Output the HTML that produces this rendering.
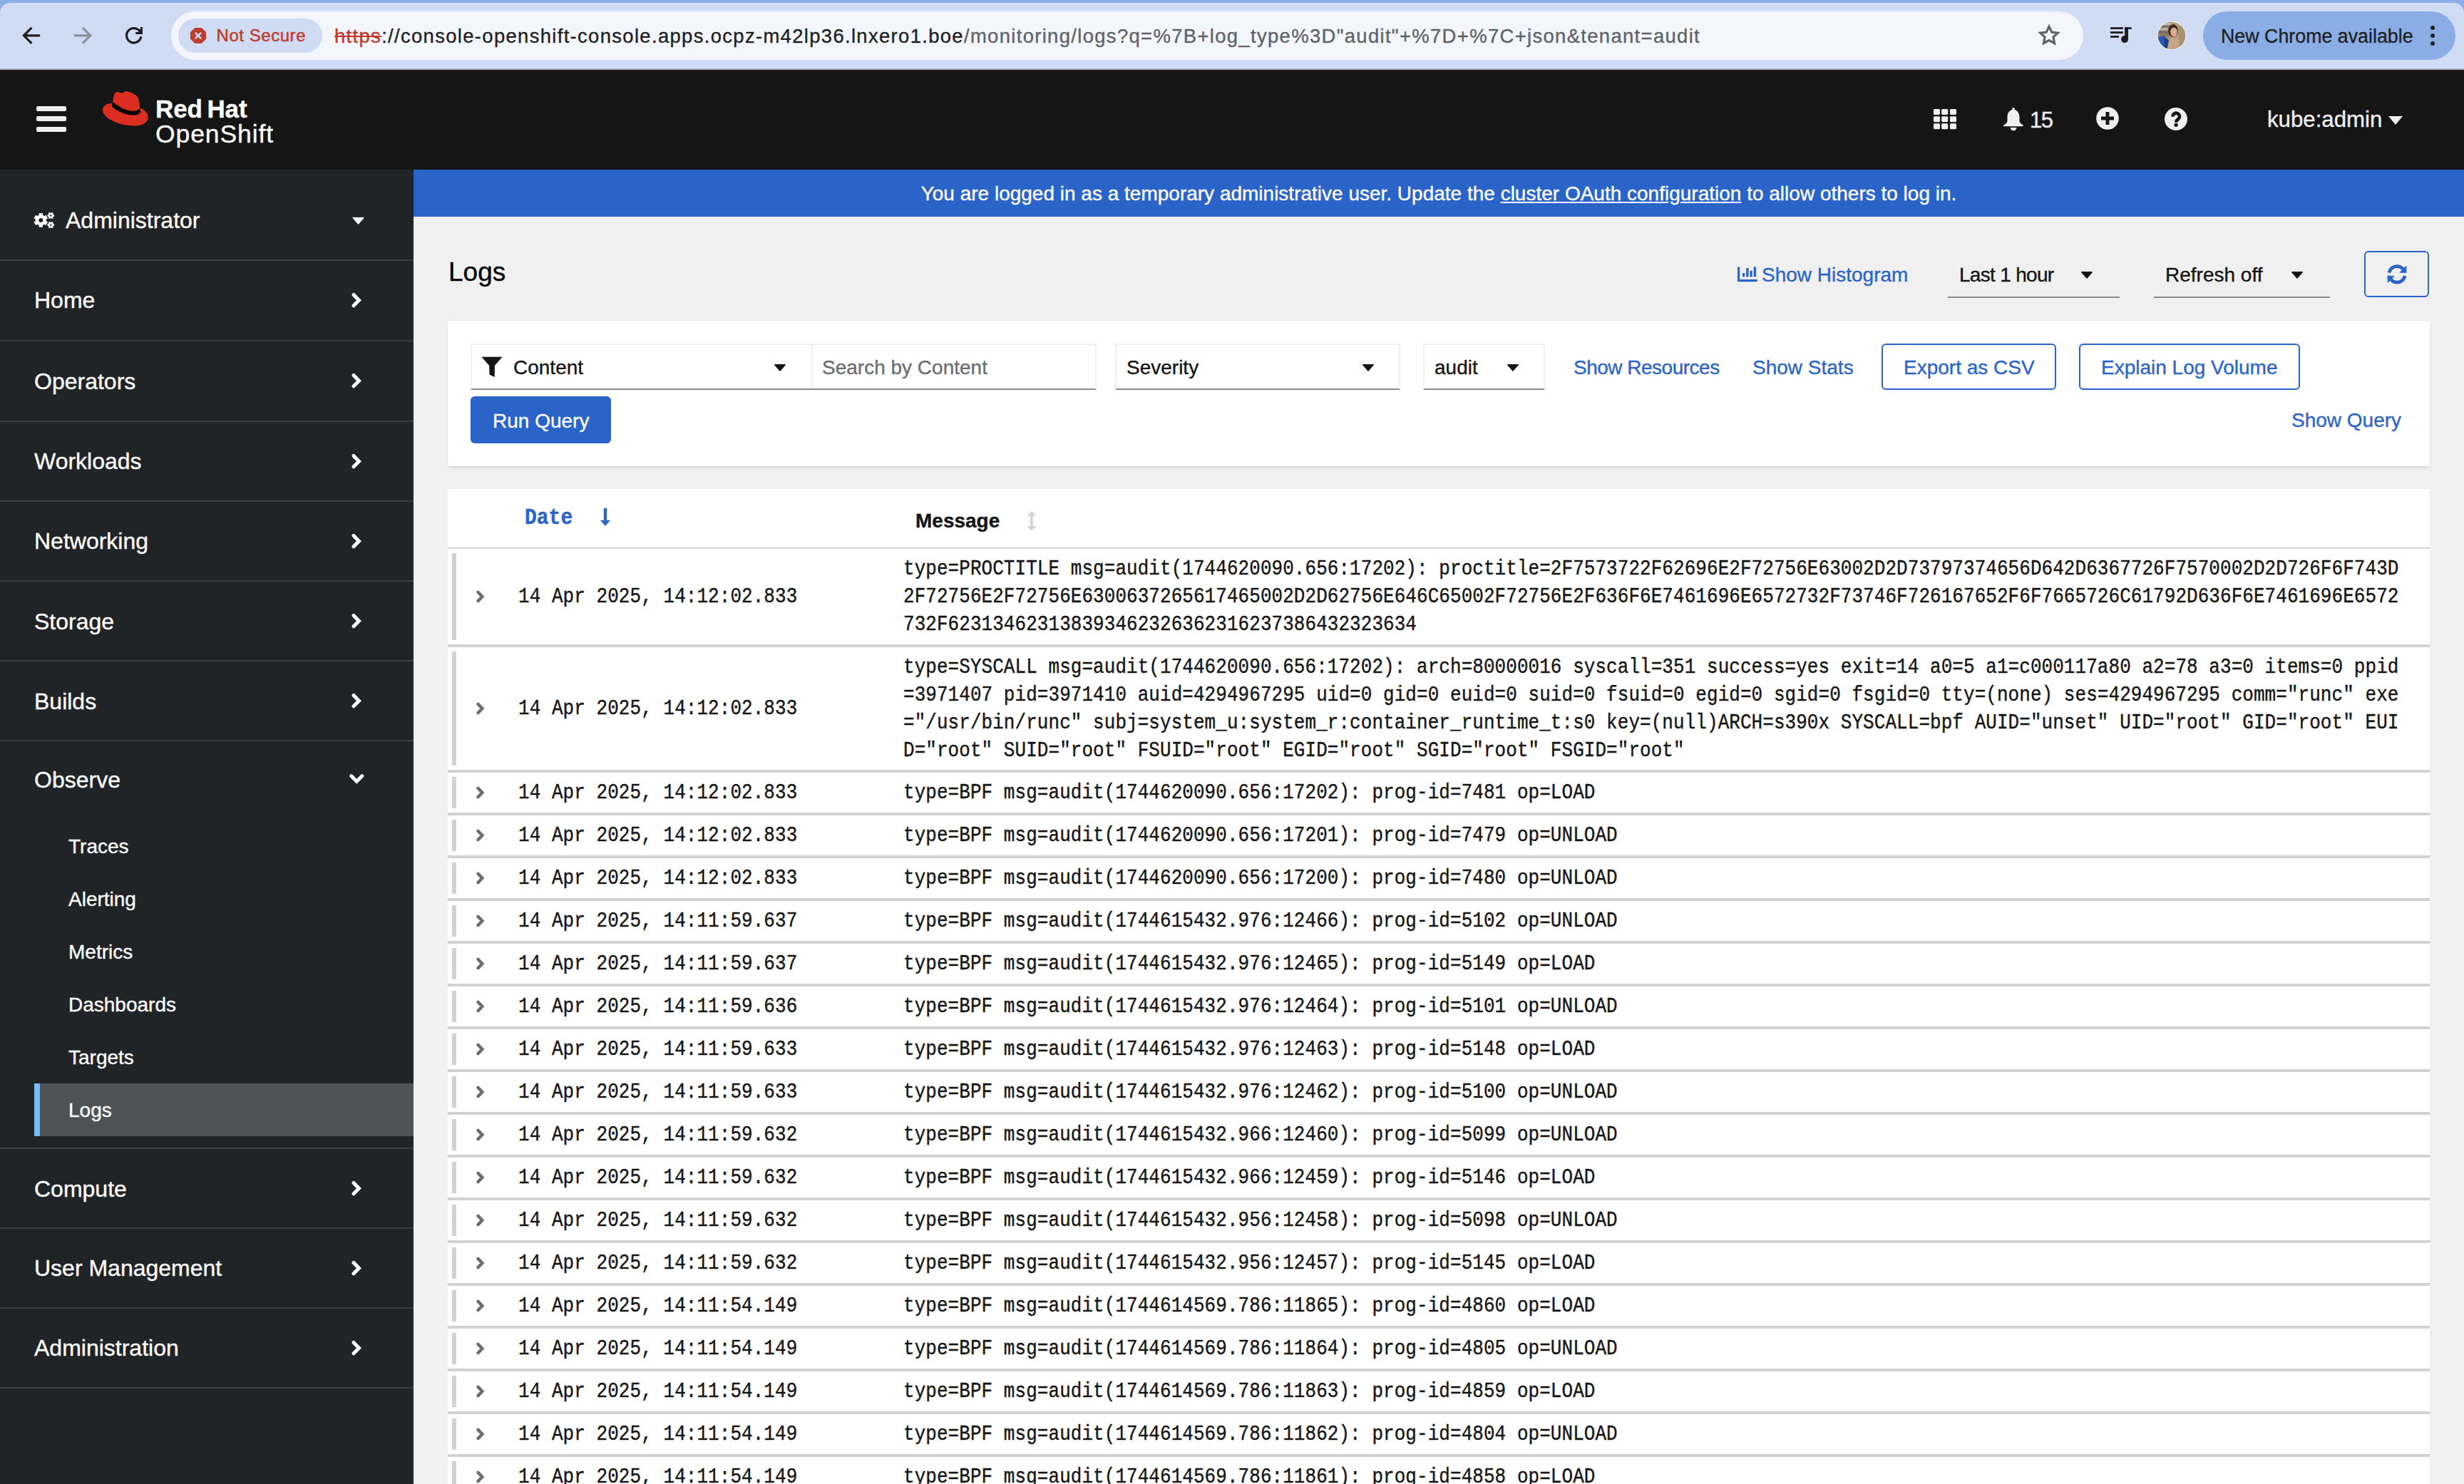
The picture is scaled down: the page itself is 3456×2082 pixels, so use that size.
<!DOCTYPE html>
<html><head><meta charset="utf-8"><title>Logs · Red Hat OpenShift</title>
<style>
html,body{margin:0;padding:0;}
body{width:3456px;height:2082px;overflow:hidden;position:relative;background:#f0f0f0;font-family:"Liberation Sans",sans-serif;}
.t{position:absolute;white-space:pre;line-height:1;-webkit-text-stroke-width:0.35px;}
svg{overflow:visible}
</style></head><body>
<div style="position:absolute;left:0px;top:0px;width:3456px;height:98px;background:#8aade5"></div>
<div style="position:absolute;left:0px;top:4px;width:3456px;height:94px;background:#cfdcf3;border-radius:14px 14px 0 0"></div>
<div style="position:absolute;left:0px;top:96px;width:3456px;height:2px;background:#aab5c8"></div>
<svg style="position:absolute;left:20px;top:25px" width="200" height="50" viewBox="0 0 200 50"><path d="M36.1,24.8 H13.5 M24.4,13.8 L13.4,24.8 L24.4,35.8" fill="none" stroke="#1f1f1f" stroke-width="3.2"/><path d="M84,24.8 H106.5 M95.8,13.8 L106.8,24.8 L95.8,35.8" fill="none" stroke="#8a929e" stroke-width="3.2"/><path d="M177.8,26.23 A10.2,10.2 0 1 1 175.72,18.46" fill="none" stroke="#1f1f1f" stroke-width="3.2"/><path d="M170.2,21.5 H178.5 V13" fill="none" stroke="#1f1f1f" stroke-width="3.0" stroke-linejoin="miter"/><path d="M175,17.5 L178.5,13.5 L178.5,21.5 L174,21.5 Z" fill="#1f1f1f"/></svg>
<div style="position:absolute;left:240px;top:16px;width:2682px;height:68px;background:#f3f6fc;border-radius:34px"></div>
<div style="position:absolute;left:250px;top:26px;width:202px;height:48px;background:#cfdcf3;border-radius:24px"></div>
<svg style="position:absolute;left:260px;top:30px" width="40" height="40" viewBox="0 0 40 40"><path d="M13.3,8.9 L22.7,8.9 L29.1,15.3 L29.1,24.7 L22.7,31 L13.3,31 L6.9,24.6 L6.9,15.3 Z" fill="#bf3d2e"/><path d="M13.9,15.9 L22.1,24.1 M22.1,15.9 L13.9,24.1" stroke="#d3e3fa" stroke-width="2.4"/></svg>
<div class="t" style="left:303.5px;top:37.50px;font-size:24px;color:#bf3d2e;font-weight:normal;font-family:'Liberation Sans', sans-serif;letter-spacing:0.55px;-webkit-text-stroke:0.5px #bf3d2e">Not Secure</div>
<div class="t" style="left:469px;top:36.92px;font-size:27.5px;color:#1f1f1f;font-weight:normal;font-family:'Liberation Sans', sans-serif;letter-spacing:1.3px"><span style="color:#c5372c;text-decoration:line-through">https</span>://console-openshift-console.apps.ocpz-m42lp36.lnxero1.boe<span style="color:#5f6368">/monitoring/logs?q=%7B+log_type%3D"audit"+%7D+%7C+json&amp;tenant=audit</span></div>
<svg style="position:absolute;left:2850px;top:25px" width="50" height="50" viewBox="0 0 50 50"><path d="M24.00,12.30 L27.70,20.10 L36.27,21.21 L29.99,27.15 L31.58,35.64 L24.00,31.50 L16.42,35.64 L18.01,27.15 L11.73,21.21 L20.30,20.10 Z" fill="none" stroke="#5f6368" stroke-width="3.2" stroke-linejoin="miter"/></svg>
<svg style="position:absolute;left:2950px;top:30px" width="50" height="40" viewBox="0 0 50 40"><rect x="10" y="8.2" width="17.9" height="2.8" fill="#1f1f1f"/><rect x="10" y="14.2" width="17.9" height="2.8" fill="#1f1f1f"/><rect x="10" y="20.1" width="11.9" height="2.8" fill="#1f1f1f"/><rect x="30.1" y="8.2" width="4.9" height="17" fill="#1f1f1f"/><rect x="30.1" y="8.2" width="9.6" height="2.8" fill="#1f1f1f"/><circle cx="30.1" cy="25.1" r="5" fill="#1f1f1f"/></svg>
<svg style="position:absolute;left:3026px;top:30px" width="40" height="40" viewBox="0 0 40 40"><defs><clipPath id="av"><circle cx="20" cy="20" r="19.2"/></clipPath><linearGradient id="st" x1="0" y1="0" x2="0" y2="1"><stop offset="0" stop-color="#8c7a68"/><stop offset="0.15" stop-color="#d8cfc4"/><stop offset="0.3" stop-color="#6e5e50"/><stop offset="0.45" stop-color="#cfc2b2"/><stop offset="0.6" stop-color="#7a6856"/><stop offset="1" stop-color="#a89078"/></linearGradient></defs><circle cx="20" cy="20" r="20" fill="#f8f8f8"/><g clip-path="url(#av)"><rect x="0" y="0" width="40" height="40" fill="#b89e80"/><rect x="0" y="0" width="18" height="24" fill="url(#st)"/><path d="M0,22 L10,20 L14,28 L12,40 L0,40 Z" fill="#2a5bb4"/><path d="M10,22 L16,26 L14,40 L9,40 Z" fill="#1b3f86"/><ellipse cx="22" cy="13" rx="7" ry="9" fill="#3d2c22"/><ellipse cx="23" cy="15" rx="4.8" ry="6.5" fill="#d8ad8e"/><path d="M14,40 C14,30 18,24 24,24 C32,24 38,30 40,40 Z" fill="#c4a684"/><path d="M28,8 L34,6 L40,14 L40,40 L32,40 Z" fill="#a8916f"/></g></svg>
<div style="position:absolute;left:3090px;top:16px;width:354px;height:68px;background:#8aade5;border-radius:34px"></div>
<div class="t" style="left:3115px;top:37.72px;font-size:26.8px;color:#1f1f1f;font-weight:normal;font-family:'Liberation Sans', sans-serif;">New Chrome available</div>
<svg style="position:absolute;left:3406px;top:34px" width="12" height="32" viewBox="0 0 12 32"><circle cx="6" cy="5" r="3" fill="#1f1f1f"/><circle cx="6" cy="16" r="3" fill="#1f1f1f"/><circle cx="6" cy="27" r="3" fill="#1f1f1f"/></svg>
<div style="position:absolute;left:0px;top:98px;width:3456px;height:140px;background:#151515"></div>
<div style="position:absolute;left:51px;top:148.5px;width:42px;height:7px;background:#f0f0f0;border-radius:2px"></div>
<div style="position:absolute;left:51px;top:163.3px;width:42px;height:7px;background:#f0f0f0;border-radius:2px"></div>
<div style="position:absolute;left:51px;top:178.3px;width:42px;height:7px;background:#f0f0f0;border-radius:2px"></div>
<svg style="position:absolute;left:138px;top:122px" width="76" height="60" viewBox="0 0 76 60"><path d="M19,23 C13,23 6,25.5 6,32.5 C6,42 26,54.5 50,54.5 C63,54.5 69.8,49 69.8,42.5 C69.8,37 65,32.5 60,30 C50,34 35,32 19,23 Z" fill="#db2e20"/><path d="M20.2,21 C21,14 22,8.5 25,7.3 C28.5,6 31,9.5 34,8.3 C36,7.5 37,6 39,6 C44,6.5 51,10 54,12.8 C57,16 57.8,24 58.5,31 C52,35 38,34 20.2,21 Z" fill="#db2e20"/><path d="M19,22.2 C28,28.5 38,33.5 50,33.8 C54,33.8 57,32 58.6,29.8 L59.4,35.2 C57.5,38 54,39.6 49,39.6 C38,39.4 27,34 19.4,28 C18.8,26 18.8,24 19,22.2 Z" fill="#000"/></svg>
<div class="t" style="left:218px;top:134.75px;font-size:35px;color:#fff;font-weight:bold;font-family:'Liberation Sans', sans-serif;letter-spacing:-0.1px;word-spacing:-3px">Red Hat</div>
<div class="t" style="left:218px;top:170.62px;font-size:35.5px;color:#fff;font-weight:normal;font-family:'Liberation Sans', sans-serif;letter-spacing:0.9px">OpenShift</div>
<svg style="position:absolute;left:2712px;top:152.8px" width="32" height="28.2" viewBox="0 0 32 28.2"><rect x="0" y="0" width="9" height="8" rx="1.4" fill="#f0f0f0"/><rect x="0" y="10.2" width="9" height="8" rx="1.4" fill="#f0f0f0"/><rect x="0" y="20.2" width="9" height="8" rx="1.4" fill="#f0f0f0"/><rect x="11.2" y="0" width="9" height="8" rx="1.4" fill="#f0f0f0"/><rect x="11.2" y="10.2" width="9" height="8" rx="1.4" fill="#f0f0f0"/><rect x="11.2" y="20.2" width="9" height="8" rx="1.4" fill="#f0f0f0"/><rect x="23" y="0" width="9" height="8" rx="1.4" fill="#f0f0f0"/><rect x="23" y="10.2" width="9" height="8" rx="1.4" fill="#f0f0f0"/><rect x="23" y="20.2" width="9" height="8" rx="1.4" fill="#f0f0f0"/></svg>
<svg style="position:absolute;left:2810px;top:150.8px" width="28" height="33" viewBox="0 0 28 33"><circle cx="14" cy="2" r="1.9" fill="#f0f0f0"/><path d="M14,2.5 C8.5,3 5.5,8 5.5,13 L5.5,19 C5.5,21 3,23 0.5,24.5 C0,25 0,26 0.8,26.3 L27.2,26.3 C28,26 28,25 27.5,24.5 C25,23 22.5,21 22.5,19 L22.5,13 C22.5,8 19.5,3 14,2.5 Z" fill="#f0f0f0"/><path d="M9.7,28 L18.6,28 C18.2,30.5 16.5,32.4 14.1,32.4 C11.8,32.4 10,30.5 9.7,28 Z" fill="#f0f0f0"/></svg>
<div class="t" style="left:2847px;top:152.95px;font-size:31px;color:#f0f0f0;font-weight:normal;font-family:'Liberation Sans', sans-serif;letter-spacing:-1.5px">15</div>
<svg style="position:absolute;left:2940px;top:150px" width="32" height="32" viewBox="0 0 32 32"><circle cx="16" cy="16" r="15.8" fill="#f0f0f0"/><path d="M16 7v18M7 16h18" stroke="#151515" stroke-width="4.9"/></svg>
<svg style="position:absolute;left:3036px;top:151px" width="32" height="32" viewBox="0 0 32 32"><circle cx="16" cy="16" r="16" fill="#f0f0f0"/><path d="M11.6,12.6 A4.7,4.7 0 1 1 19.3,16 C17.6,17.3 16.2,18 16.2,20.8" fill="none" stroke="#151515" stroke-width="4.6"/><circle cx="16.1" cy="24.3" r="2.6" fill="#151515"/></svg>
<div class="t" style="left:3180px;top:152.48px;font-size:31.2px;color:#f0f0f0;font-weight:normal;font-family:'Liberation Sans', sans-serif;">kube:admin</div>
<svg style="position:absolute;left:3350px;top:163px" width="20" height="12" viewBox="0 0 20 12"><path d="M0 0h20L10 12z" fill="#f0f0f0"/></svg>
<div style="position:absolute;left:0px;top:238px;width:580px;height:1844px;background:#212427"></div>
<svg style="position:absolute;left:40px;top:290px" width="50" height="40" viewBox="0 0 50 40"><circle cx="17.3" cy="18.9" r="7.6" fill="#fff"/><rect x="14.65" y="9.099999999999998" width="5.3" height="9.8" fill="#fff" transform="rotate(0.0 17.3 18.9)"/><rect x="14.65" y="9.099999999999998" width="5.3" height="9.8" fill="#fff" transform="rotate(60.0 17.3 18.9)"/><rect x="14.65" y="9.099999999999998" width="5.3" height="9.8" fill="#fff" transform="rotate(120.0 17.3 18.9)"/><rect x="14.65" y="9.099999999999998" width="5.3" height="9.8" fill="#fff" transform="rotate(180.0 17.3 18.9)"/><rect x="14.65" y="9.099999999999998" width="5.3" height="9.8" fill="#fff" transform="rotate(240.0 17.3 18.9)"/><rect x="14.65" y="9.099999999999998" width="5.3" height="9.8" fill="#fff" transform="rotate(300.0 17.3 18.9)"/><circle cx="17.3" cy="18.9" r="3.0" fill="#212427"/><circle cx="31.3" cy="12.4" r="3.7" fill="#fff"/><rect x="30.150000000000002" y="7.6000000000000005" width="2.3" height="4.8" fill="#fff" transform="rotate(30.0 31.3 12.4)"/><rect x="30.150000000000002" y="7.6000000000000005" width="2.3" height="4.8" fill="#fff" transform="rotate(90.0 31.3 12.4)"/><rect x="30.150000000000002" y="7.6000000000000005" width="2.3" height="4.8" fill="#fff" transform="rotate(150.0 31.3 12.4)"/><rect x="30.150000000000002" y="7.6000000000000005" width="2.3" height="4.8" fill="#fff" transform="rotate(210.0 31.3 12.4)"/><rect x="30.150000000000002" y="7.6000000000000005" width="2.3" height="4.8" fill="#fff" transform="rotate(270.0 31.3 12.4)"/><rect x="30.150000000000002" y="7.6000000000000005" width="2.3" height="4.8" fill="#fff" transform="rotate(330.0 31.3 12.4)"/><circle cx="31.3" cy="12.4" r="1.2" fill="#212427"/><circle cx="31.3" cy="25.6" r="3.7" fill="#fff"/><rect x="30.150000000000002" y="20.8" width="2.3" height="4.8" fill="#fff" transform="rotate(30.0 31.3 25.6)"/><rect x="30.150000000000002" y="20.8" width="2.3" height="4.8" fill="#fff" transform="rotate(90.0 31.3 25.6)"/><rect x="30.150000000000002" y="20.8" width="2.3" height="4.8" fill="#fff" transform="rotate(150.0 31.3 25.6)"/><rect x="30.150000000000002" y="20.8" width="2.3" height="4.8" fill="#fff" transform="rotate(210.0 31.3 25.6)"/><rect x="30.150000000000002" y="20.8" width="2.3" height="4.8" fill="#fff" transform="rotate(270.0 31.3 25.6)"/><rect x="30.150000000000002" y="20.8" width="2.3" height="4.8" fill="#fff" transform="rotate(330.0 31.3 25.6)"/><circle cx="31.3" cy="25.6" r="1.2" fill="#212427"/></svg>
<div class="t" style="left:92px;top:292.80px;font-size:32px;color:#fff;font-weight:normal;font-family:'Liberation Sans', sans-serif;">Administrator</div>
<svg style="position:absolute;left:493.5px;top:305.4px" width="17" height="10" viewBox="0 0 17 10"><path d="M0.5 0.3h16L8.5 9.6z" fill="#fff" stroke="#fff" stroke-width="0.8" stroke-linejoin="round"/></svg>
<div style="position:absolute;left:0px;top:364px;width:580px;height:2px;background:#3c3f42"></div>
<div style="position:absolute;left:0px;top:477px;width:580px;height:2px;background:#3c3f42"></div>
<div style="position:absolute;left:0px;top:590px;width:580px;height:2px;background:#3c3f42"></div>
<div style="position:absolute;left:0px;top:702px;width:580px;height:2px;background:#3c3f42"></div>
<div style="position:absolute;left:0px;top:814px;width:580px;height:2px;background:#3c3f42"></div>
<div style="position:absolute;left:0px;top:926px;width:580px;height:2px;background:#3c3f42"></div>
<div style="position:absolute;left:0px;top:1038px;width:580px;height:2px;background:#3c3f42"></div>
<div style="position:absolute;left:0px;top:1610px;width:580px;height:2px;background:#3c3f42"></div>
<div style="position:absolute;left:0px;top:1722px;width:580px;height:2px;background:#3c3f42"></div>
<div style="position:absolute;left:0px;top:1834px;width:580px;height:2px;background:#3c3f42"></div>
<div style="position:absolute;left:0px;top:1946px;width:580px;height:2px;background:#3c3f42"></div>
<div class="t" style="left:48px;top:405.30px;font-size:32px;color:#fff;font-weight:normal;font-family:'Liberation Sans', sans-serif;">Home</div>
<svg style="position:absolute;left:490px;top:407.9px" width="20" height="26" viewBox="0 0 20 26"><path d="M6,5.5 L13.5,13.2 L6,20.8" fill="none" stroke="#fff" stroke-width="5" stroke-linecap="round"/></svg>
<div class="t" style="left:48px;top:518.60px;font-size:32px;color:#fff;font-weight:normal;font-family:'Liberation Sans', sans-serif;">Operators</div>
<svg style="position:absolute;left:490px;top:521.1999999999999px" width="20" height="26" viewBox="0 0 20 26"><path d="M6,5.5 L13.5,13.2 L6,20.8" fill="none" stroke="#fff" stroke-width="5" stroke-linecap="round"/></svg>
<div class="t" style="left:48px;top:631.20px;font-size:32px;color:#fff;font-weight:normal;font-family:'Liberation Sans', sans-serif;">Workloads</div>
<svg style="position:absolute;left:490px;top:633.8px" width="20" height="26" viewBox="0 0 20 26"><path d="M6,5.5 L13.5,13.2 L6,20.8" fill="none" stroke="#fff" stroke-width="5" stroke-linecap="round"/></svg>
<div class="t" style="left:48px;top:743.30px;font-size:32px;color:#fff;font-weight:normal;font-family:'Liberation Sans', sans-serif;">Networking</div>
<svg style="position:absolute;left:490px;top:745.9px" width="20" height="26" viewBox="0 0 20 26"><path d="M6,5.5 L13.5,13.2 L6,20.8" fill="none" stroke="#fff" stroke-width="5" stroke-linecap="round"/></svg>
<div class="t" style="left:48px;top:855.60px;font-size:32px;color:#fff;font-weight:normal;font-family:'Liberation Sans', sans-serif;">Storage</div>
<svg style="position:absolute;left:490px;top:858.1999999999999px" width="20" height="26" viewBox="0 0 20 26"><path d="M6,5.5 L13.5,13.2 L6,20.8" fill="none" stroke="#fff" stroke-width="5" stroke-linecap="round"/></svg>
<div class="t" style="left:48px;top:967.60px;font-size:32px;color:#fff;font-weight:normal;font-family:'Liberation Sans', sans-serif;">Builds</div>
<svg style="position:absolute;left:490px;top:970.1999999999999px" width="20" height="26" viewBox="0 0 20 26"><path d="M6,5.5 L13.5,13.2 L6,20.8" fill="none" stroke="#fff" stroke-width="5" stroke-linecap="round"/></svg>
<div class="t" style="left:48px;top:1651.60px;font-size:32px;color:#fff;font-weight:normal;font-family:'Liberation Sans', sans-serif;">Compute</div>
<svg style="position:absolute;left:490px;top:1654.2px" width="20" height="26" viewBox="0 0 20 26"><path d="M6,5.5 L13.5,13.2 L6,20.8" fill="none" stroke="#fff" stroke-width="5" stroke-linecap="round"/></svg>
<div class="t" style="left:48px;top:1763.20px;font-size:32px;color:#fff;font-weight:normal;font-family:'Liberation Sans', sans-serif;">User Management</div>
<svg style="position:absolute;left:490px;top:1765.8px" width="20" height="26" viewBox="0 0 20 26"><path d="M6,5.5 L13.5,13.2 L6,20.8" fill="none" stroke="#fff" stroke-width="5" stroke-linecap="round"/></svg>
<div class="t" style="left:48px;top:1875.20px;font-size:32px;color:#fff;font-weight:normal;font-family:'Liberation Sans', sans-serif;">Administration</div>
<svg style="position:absolute;left:490px;top:1877.8px" width="20" height="26" viewBox="0 0 20 26"><path d="M6,5.5 L13.5,13.2 L6,20.8" fill="none" stroke="#fff" stroke-width="5" stroke-linecap="round"/></svg>
<div class="t" style="left:48px;top:1078.30px;font-size:32px;color:#fff;font-weight:normal;font-family:'Liberation Sans', sans-serif;">Observe</div>
<svg style="position:absolute;left:485px;top:1080px" width="30" height="24" viewBox="0 0 30 24"><path d="M7.8,8.7 L15.3,16.2 L22.8,8.7" fill="none" stroke="#fff" stroke-width="5" stroke-linecap="round"/></svg>
<div style="position:absolute;left:48px;top:1520px;width:532px;height:74px;background:#4f5255"></div>
<div style="position:absolute;left:48px;top:1520px;width:8px;height:74px;background:#73bcf7"></div>
<div class="t" style="left:96px;top:1174.20px;font-size:28px;color:#fff;font-weight:normal;font-family:'Liberation Sans', sans-serif;">Traces</div>
<div class="t" style="left:96px;top:1247.90px;font-size:28px;color:#fff;font-weight:normal;font-family:'Liberation Sans', sans-serif;">Alerting</div>
<div class="t" style="left:96px;top:1321.70px;font-size:28px;color:#fff;font-weight:normal;font-family:'Liberation Sans', sans-serif;">Metrics</div>
<div class="t" style="left:96px;top:1395.70px;font-size:28px;color:#fff;font-weight:normal;font-family:'Liberation Sans', sans-serif;">Dashboards</div>
<div class="t" style="left:96px;top:1469.50px;font-size:28px;color:#fff;font-weight:normal;font-family:'Liberation Sans', sans-serif;">Targets</div>
<div class="t" style="left:96px;top:1544.20px;font-size:28px;color:#fff;font-weight:normal;font-family:'Liberation Sans', sans-serif;">Logs</div>
<div style="position:absolute;left:580px;top:238px;width:2876px;height:66px;background:#2b64c8"></div>
<div class="t" style="left:580px;width:2876px;text-align:center;top:257.90px;font-size:28px;color:#fff">You are logged in as a temporary administrative user. Update the <span style="text-decoration:underline">cluster OAuth configuration</span> to allow others to log in.</div>
<div style="position:absolute;left:580px;top:304px;width:2876px;height:1778px;background:#f0f0f0"></div>
<div class="t" style="left:629px;top:363.35px;font-size:37px;color:#000;font-weight:normal;font-family:'Liberation Sans', sans-serif;">Logs</div>
<svg style="position:absolute;left:2430px;top:365px" width="40" height="40" viewBox="0 0 40 40"><path d="M7,9.4 h3.2 v17.6 h24.6 v3.2 H7 z" fill="#2b64c8"/><rect x="14" y="18" width="3.3" height="5.5" rx="0.8" fill="#2b64c8"/><rect x="19.2" y="11" width="3.4" height="12.5" rx="0.8" fill="#2b64c8"/><rect x="24.4" y="14.8" width="3.4" height="8.7" rx="0.8" fill="#2b64c8"/><rect x="29.7" y="9.2" width="3.4" height="14.3" rx="0.8" fill="#2b64c8"/></svg>
<div class="t" style="left:2471px;top:372.10px;font-size:28px;color:#2b64c8;font-weight:normal;font-family:'Liberation Sans', sans-serif;">Show Histogram</div>
<div class="t" style="left:2748px;top:372.10px;font-size:28px;color:#151515;font-weight:normal;font-family:'Liberation Sans', sans-serif;letter-spacing:-0.7px">Last 1 hour</div>
<svg style="position:absolute;left:2919px;top:381.4px" width="16" height="10" viewBox="0 0 16 10"><path d="M0.8,0.8 H15.2 L8,9.0 Z" fill="#151515" stroke="#151515" stroke-width="1.5" stroke-linejoin="round"/></svg>
<div style="position:absolute;left:2732px;top:416px;width:241px;height:2px;background:#8a8d90"></div>
<div class="t" style="left:3037px;top:372.10px;font-size:28px;color:#151515;font-weight:normal;font-family:'Liberation Sans', sans-serif;">Refresh off</div>
<svg style="position:absolute;left:3214px;top:381.4px" width="16" height="10" viewBox="0 0 16 10"><path d="M0.8,0.8 H15.2 L8,9.0 Z" fill="#151515" stroke="#151515" stroke-width="1.5" stroke-linejoin="round"/></svg>
<div style="position:absolute;left:3021px;top:416px;width:247px;height:2px;background:#8a8d90"></div>
<div style="position:absolute;left:3316px;top:352px;width:91px;height:65px;box-sizing:border-box;border:2px solid #2b64c8;border-radius:6px"></div>
<svg style="position:absolute;left:3340px;top:360px" width="50" height="50" viewBox="0 0 50 50"><path d="M11,22.66 A11.2,11.2 0 0 1 30.58,17.6" fill="none" stroke="#2b64c8" stroke-width="4.7"/><path d="M34.8,13.2 L35.1,22.6 L25.9,22.2 Z" fill="#2b64c8" stroke="#2b64c8" stroke-width="0.8" stroke-linejoin="round"/><g transform="rotate(180 22 24.8)"><path d="M11,22.66 A11.2,11.2 0 0 1 30.58,17.6" fill="none" stroke="#2b64c8" stroke-width="4.7"/><path d="M34.8,13.2 L35.1,22.6 L25.9,22.2 Z" fill="#2b64c8" stroke="#2b64c8" stroke-width="0.8" stroke-linejoin="round"/></g></svg>
<div style="position:absolute;left:628px;top:450px;width:2780px;height:204px;background:#fff;box-shadow:0 4px 6px -3px rgba(3,3,3,0.16), 0 0 3px rgba(3,3,3,0.04)"></div>
<div style="position:absolute;left:660px;top:482px;width:878px;height:65px;box-sizing:border-box;border:2px solid #f0f0f0;border-bottom:2px solid #8a8d90"></div>
<div style="position:absolute;left:1138px;top:482px;width:2px;height:63px;background:#f0f0f0"></div>
<svg style="position:absolute;left:675px;top:500px" width="30" height="30" viewBox="0 0 30 30"><path d="M1.1,1.1 L28.9,1.1 L18.5,12.9 L18.3,28.4 L11.9,25.4 L11.6,12.9 Z" fill="#151515" stroke="#151515" stroke-width="0.8" stroke-linejoin="round"/></svg>
<div class="t" style="left:720px;top:502.20px;font-size:28px;color:#151515;font-weight:normal;font-family:'Liberation Sans', sans-serif;">Content</div>
<svg style="position:absolute;left:1086px;top:511.2px" width="16" height="10" viewBox="0 0 16 10"><path d="M0.8,0.8 H15.2 L8,9.0 Z" fill="#151515" stroke="#151515" stroke-width="1.5" stroke-linejoin="round"/></svg>
<div class="t" style="left:1153px;top:502.20px;font-size:28px;color:#6a6e73;font-weight:normal;font-family:'Liberation Sans', sans-serif;">Search by Content</div>
<div style="position:absolute;left:1564px;top:482px;width:400px;height:65px;box-sizing:border-box;border:2px solid #f0f0f0;border-bottom:2px solid #8a8d90"></div>
<div class="t" style="left:1580px;top:502.20px;font-size:28px;color:#151515;font-weight:normal;font-family:'Liberation Sans', sans-serif;">Severity</div>
<svg style="position:absolute;left:1911px;top:511.2px" width="16" height="10" viewBox="0 0 16 10"><path d="M0.8,0.8 H15.2 L8,9.0 Z" fill="#151515" stroke="#151515" stroke-width="1.5" stroke-linejoin="round"/></svg>
<div style="position:absolute;left:1996px;top:482px;width:171px;height:65px;box-sizing:border-box;border:2px solid #f0f0f0;border-bottom:2px solid #8a8d90"></div>
<div class="t" style="left:2012px;top:502.20px;font-size:28px;color:#151515;font-weight:normal;font-family:'Liberation Sans', sans-serif;">audit</div>
<svg style="position:absolute;left:2114px;top:511.2px" width="16" height="10" viewBox="0 0 16 10"><path d="M0.8,0.8 H15.2 L8,9.0 Z" fill="#151515" stroke="#151515" stroke-width="1.5" stroke-linejoin="round"/></svg>
<div class="t" style="left:2207px;top:501.90px;font-size:28px;color:#2b64c8;font-weight:normal;font-family:'Liberation Sans', sans-serif;letter-spacing:-0.5px">Show Resources</div>
<div class="t" style="left:2458px;top:501.90px;font-size:28px;color:#2b64c8;font-weight:normal;font-family:'Liberation Sans', sans-serif;">Show Stats</div>
<div style="position:absolute;left:2639px;top:482px;width:245px;height:65px;box-sizing:border-box;border:2px solid #2b64c8;border-radius:6px"></div>
<div class="t" style="left:2670px;top:501.90px;font-size:28px;color:#2b64c8;font-weight:normal;font-family:'Liberation Sans', sans-serif;">Export as CSV</div>
<div style="position:absolute;left:2916px;top:482px;width:310px;height:65px;box-sizing:border-box;border:2px solid #2b64c8;border-radius:6px"></div>
<div class="t" style="left:2947px;top:501.90px;font-size:28px;color:#2b64c8;font-weight:normal;font-family:'Liberation Sans', sans-serif;">Explain Log Volume</div>
<div style="position:absolute;left:660px;top:556px;width:197px;height:66px;background:#2b64c8;border-radius:6px"></div>
<div class="t" style="left:691px;top:576.50px;font-size:28px;color:#fff;font-weight:normal;font-family:'Liberation Sans', sans-serif;">Run Query</div>
<div class="t" style="left:3214px;top:575.70px;font-size:28px;color:#2b64c8;font-weight:normal;font-family:'Liberation Sans', sans-serif;">Show Query</div>
<div style="position:absolute;left:628px;top:686px;width:2780px;height:1396px;background:#fff"></div>
<div class="t" style="left:736px;top:713.72px;font-size:28px;color:#2b64c8;font-weight:bold;font-family:'Liberation Mono', monospace;transform:scaleY(1.1);transform-origin:0 21.28px;">Date</div>
<svg style="position:absolute;left:842px;top:713px" width="14" height="26" viewBox="0 0 14 26"><path d="M7 0v22" stroke="#2b64c8" stroke-width="4.4"/><path d="M0 17l7 8 7-8z" fill="#2b64c8"/></svg>
<div class="t" style="left:1284px;top:717.00px;font-size:28px;color:#151515;font-weight:bold;font-family:'Liberation Sans', sans-serif;">Message</div>
<svg style="position:absolute;left:1441px;top:717px" width="12" height="28" viewBox="0 0 12 28"><path d="M6 3v22" stroke="#d2d2d2" stroke-width="3.4"/><path d="M0 7l6-7 6 7zM0 21l6 7 6-7z" fill="#d2d2d2"/></svg>
<div style="position:absolute;left:628px;top:768px;width:2780px;height:2px;background:#d2d2d2"></div>
<div style="position:absolute;left:634px;top:776px;width:6px;height:122px;background:#d2d2d2"></div>
<svg style="position:absolute;left:667px;top:827.0px" width="14" height="20" viewBox="0 0 14 20"><path d="M3.5,3.9 L9.4,10 L3.5,16.1" fill="none" stroke="#6a6e73" stroke-width="4.4" stroke-linecap="round"/></svg>
<div class="t" style="left:727px;top:825.44px;font-size:26px;color:#151515;font-weight:normal;font-family:'Liberation Mono', monospace;transform:scaleY(1.1);transform-origin:0 19.76px;letter-spacing:0.05px">14 Apr 2025, 14:12:02.833</div>
<div class="t" style="left:1267px;top:786.44px;font-size:26px;color:#151515;font-weight:normal;font-family:'Liberation Mono', monospace;transform:scaleY(1.1);transform-origin:0 19.76px;letter-spacing:0.05px">type=PROCTITLE msg=audit(1744620090.656:17202): proctitle=2F7573722F62696E2F72756E63002D2D73797374656D642D6367726F7570002D2D726F6F743D</div>
<div class="t" style="left:1267px;top:825.44px;font-size:26px;color:#151515;font-weight:normal;font-family:'Liberation Mono', monospace;transform:scaleY(1.1);transform-origin:0 19.76px;letter-spacing:0.05px">2F72756E2F72756E6300637265617465002D2D62756E646C65002F72756E2F636F6E7461696E6572732F73746F726167652F6F7665726C61792D636F6E7461696E6572</div>
<div class="t" style="left:1267px;top:864.44px;font-size:26px;color:#151515;font-weight:normal;font-family:'Liberation Mono', monospace;transform:scaleY(1.1);transform-origin:0 19.76px;letter-spacing:0.05px">732F623134623138393462326362316237386432323634</div>
<div style="position:absolute;left:628px;top:904px;width:2780px;height:4px;background:#d2d2d2"></div>
<div style="position:absolute;left:634px;top:914px;width:6px;height:160px;background:#d2d2d2"></div>
<svg style="position:absolute;left:667px;top:984.0px" width="14" height="20" viewBox="0 0 14 20"><path d="M3.5,3.9 L9.4,10 L3.5,16.1" fill="none" stroke="#6a6e73" stroke-width="4.4" stroke-linecap="round"/></svg>
<div class="t" style="left:727px;top:982.44px;font-size:26px;color:#151515;font-weight:normal;font-family:'Liberation Mono', monospace;transform:scaleY(1.1);transform-origin:0 19.76px;letter-spacing:0.05px">14 Apr 2025, 14:12:02.833</div>
<div class="t" style="left:1267px;top:923.94px;font-size:26px;color:#151515;font-weight:normal;font-family:'Liberation Mono', monospace;transform:scaleY(1.1);transform-origin:0 19.76px;letter-spacing:0.05px">type=SYSCALL msg=audit(1744620090.656:17202): arch=80000016 syscall=351 success=yes exit=14 a0=5 a1=c000117a80 a2=78 a3=0 items=0 ppid</div>
<div class="t" style="left:1267px;top:962.94px;font-size:26px;color:#151515;font-weight:normal;font-family:'Liberation Mono', monospace;transform:scaleY(1.1);transform-origin:0 19.76px;letter-spacing:0.05px">=3971407 pid=3971410 auid=4294967295 uid=0 gid=0 euid=0 suid=0 fsuid=0 egid=0 sgid=0 fsgid=0 tty=(none) ses=4294967295 comm="runc" exe</div>
<div class="t" style="left:1267px;top:1001.94px;font-size:26px;color:#151515;font-weight:normal;font-family:'Liberation Mono', monospace;transform:scaleY(1.1);transform-origin:0 19.76px;letter-spacing:0.05px">="/usr/bin/runc" subj=system_u:system_r:container_runtime_t:s0 key=(null)ARCH=s390x SYSCALL=bpf AUID="unset" UID="root" GID="root" EUI</div>
<div class="t" style="left:1267px;top:1040.94px;font-size:26px;color:#151515;font-weight:normal;font-family:'Liberation Mono', monospace;transform:scaleY(1.1);transform-origin:0 19.76px;letter-spacing:0.05px">D="root" SUID="root" FSUID="root" EGID="root" SGID="root" FSGID="root"</div>
<div style="position:absolute;left:628px;top:1080px;width:2780px;height:4px;background:#d2d2d2"></div>
<div style="position:absolute;left:634px;top:1090px;width:6px;height:44px;background:#d2d2d2"></div>
<svg style="position:absolute;left:667px;top:1102.0px" width="14" height="20" viewBox="0 0 14 20"><path d="M3.5,3.9 L9.4,10 L3.5,16.1" fill="none" stroke="#6a6e73" stroke-width="4.4" stroke-linecap="round"/></svg>
<div class="t" style="left:727px;top:1100.44px;font-size:26px;color:#151515;font-weight:normal;font-family:'Liberation Mono', monospace;transform:scaleY(1.1);transform-origin:0 19.76px;letter-spacing:0.05px">14 Apr 2025, 14:12:02.833</div>
<div class="t" style="left:1267px;top:1100.44px;font-size:26px;color:#151515;font-weight:normal;font-family:'Liberation Mono', monospace;transform:scaleY(1.1);transform-origin:0 19.76px;letter-spacing:0.05px">type=BPF msg=audit(1744620090.656:17202): prog-id=7481 op=LOAD</div>
<div style="position:absolute;left:628px;top:1140px;width:2780px;height:4px;background:#d2d2d2"></div>
<div style="position:absolute;left:634px;top:1150px;width:6px;height:44px;background:#d2d2d2"></div>
<svg style="position:absolute;left:667px;top:1162.0px" width="14" height="20" viewBox="0 0 14 20"><path d="M3.5,3.9 L9.4,10 L3.5,16.1" fill="none" stroke="#6a6e73" stroke-width="4.4" stroke-linecap="round"/></svg>
<div class="t" style="left:727px;top:1160.44px;font-size:26px;color:#151515;font-weight:normal;font-family:'Liberation Mono', monospace;transform:scaleY(1.1);transform-origin:0 19.76px;letter-spacing:0.05px">14 Apr 2025, 14:12:02.833</div>
<div class="t" style="left:1267px;top:1160.44px;font-size:26px;color:#151515;font-weight:normal;font-family:'Liberation Mono', monospace;transform:scaleY(1.1);transform-origin:0 19.76px;letter-spacing:0.05px">type=BPF msg=audit(1744620090.656:17201): prog-id=7479 op=UNLOAD</div>
<div style="position:absolute;left:628px;top:1200px;width:2780px;height:4px;background:#d2d2d2"></div>
<div style="position:absolute;left:634px;top:1210px;width:6px;height:44px;background:#d2d2d2"></div>
<svg style="position:absolute;left:667px;top:1222.0px" width="14" height="20" viewBox="0 0 14 20"><path d="M3.5,3.9 L9.4,10 L3.5,16.1" fill="none" stroke="#6a6e73" stroke-width="4.4" stroke-linecap="round"/></svg>
<div class="t" style="left:727px;top:1220.44px;font-size:26px;color:#151515;font-weight:normal;font-family:'Liberation Mono', monospace;transform:scaleY(1.1);transform-origin:0 19.76px;letter-spacing:0.05px">14 Apr 2025, 14:12:02.833</div>
<div class="t" style="left:1267px;top:1220.44px;font-size:26px;color:#151515;font-weight:normal;font-family:'Liberation Mono', monospace;transform:scaleY(1.1);transform-origin:0 19.76px;letter-spacing:0.05px">type=BPF msg=audit(1744620090.656:17200): prog-id=7480 op=UNLOAD</div>
<div style="position:absolute;left:628px;top:1260px;width:2780px;height:4px;background:#d2d2d2"></div>
<div style="position:absolute;left:634px;top:1270px;width:6px;height:44px;background:#d2d2d2"></div>
<svg style="position:absolute;left:667px;top:1282.0px" width="14" height="20" viewBox="0 0 14 20"><path d="M3.5,3.9 L9.4,10 L3.5,16.1" fill="none" stroke="#6a6e73" stroke-width="4.4" stroke-linecap="round"/></svg>
<div class="t" style="left:727px;top:1280.44px;font-size:26px;color:#151515;font-weight:normal;font-family:'Liberation Mono', monospace;transform:scaleY(1.1);transform-origin:0 19.76px;letter-spacing:0.05px">14 Apr 2025, 14:11:59.637</div>
<div class="t" style="left:1267px;top:1280.44px;font-size:26px;color:#151515;font-weight:normal;font-family:'Liberation Mono', monospace;transform:scaleY(1.1);transform-origin:0 19.76px;letter-spacing:0.05px">type=BPF msg=audit(1744615432.976:12466): prog-id=5102 op=UNLOAD</div>
<div style="position:absolute;left:628px;top:1320px;width:2780px;height:4px;background:#d2d2d2"></div>
<div style="position:absolute;left:634px;top:1330px;width:6px;height:44px;background:#d2d2d2"></div>
<svg style="position:absolute;left:667px;top:1342.0px" width="14" height="20" viewBox="0 0 14 20"><path d="M3.5,3.9 L9.4,10 L3.5,16.1" fill="none" stroke="#6a6e73" stroke-width="4.4" stroke-linecap="round"/></svg>
<div class="t" style="left:727px;top:1340.44px;font-size:26px;color:#151515;font-weight:normal;font-family:'Liberation Mono', monospace;transform:scaleY(1.1);transform-origin:0 19.76px;letter-spacing:0.05px">14 Apr 2025, 14:11:59.637</div>
<div class="t" style="left:1267px;top:1340.44px;font-size:26px;color:#151515;font-weight:normal;font-family:'Liberation Mono', monospace;transform:scaleY(1.1);transform-origin:0 19.76px;letter-spacing:0.05px">type=BPF msg=audit(1744615432.976:12465): prog-id=5149 op=LOAD</div>
<div style="position:absolute;left:628px;top:1380px;width:2780px;height:4px;background:#d2d2d2"></div>
<div style="position:absolute;left:634px;top:1390px;width:6px;height:44px;background:#d2d2d2"></div>
<svg style="position:absolute;left:667px;top:1402.0px" width="14" height="20" viewBox="0 0 14 20"><path d="M3.5,3.9 L9.4,10 L3.5,16.1" fill="none" stroke="#6a6e73" stroke-width="4.4" stroke-linecap="round"/></svg>
<div class="t" style="left:727px;top:1400.44px;font-size:26px;color:#151515;font-weight:normal;font-family:'Liberation Mono', monospace;transform:scaleY(1.1);transform-origin:0 19.76px;letter-spacing:0.05px">14 Apr 2025, 14:11:59.636</div>
<div class="t" style="left:1267px;top:1400.44px;font-size:26px;color:#151515;font-weight:normal;font-family:'Liberation Mono', monospace;transform:scaleY(1.1);transform-origin:0 19.76px;letter-spacing:0.05px">type=BPF msg=audit(1744615432.976:12464): prog-id=5101 op=UNLOAD</div>
<div style="position:absolute;left:628px;top:1440px;width:2780px;height:4px;background:#d2d2d2"></div>
<div style="position:absolute;left:634px;top:1450px;width:6px;height:44px;background:#d2d2d2"></div>
<svg style="position:absolute;left:667px;top:1462.0px" width="14" height="20" viewBox="0 0 14 20"><path d="M3.5,3.9 L9.4,10 L3.5,16.1" fill="none" stroke="#6a6e73" stroke-width="4.4" stroke-linecap="round"/></svg>
<div class="t" style="left:727px;top:1460.44px;font-size:26px;color:#151515;font-weight:normal;font-family:'Liberation Mono', monospace;transform:scaleY(1.1);transform-origin:0 19.76px;letter-spacing:0.05px">14 Apr 2025, 14:11:59.633</div>
<div class="t" style="left:1267px;top:1460.44px;font-size:26px;color:#151515;font-weight:normal;font-family:'Liberation Mono', monospace;transform:scaleY(1.1);transform-origin:0 19.76px;letter-spacing:0.05px">type=BPF msg=audit(1744615432.976:12463): prog-id=5148 op=LOAD</div>
<div style="position:absolute;left:628px;top:1500px;width:2780px;height:4px;background:#d2d2d2"></div>
<div style="position:absolute;left:634px;top:1510px;width:6px;height:44px;background:#d2d2d2"></div>
<svg style="position:absolute;left:667px;top:1522.0px" width="14" height="20" viewBox="0 0 14 20"><path d="M3.5,3.9 L9.4,10 L3.5,16.1" fill="none" stroke="#6a6e73" stroke-width="4.4" stroke-linecap="round"/></svg>
<div class="t" style="left:727px;top:1520.44px;font-size:26px;color:#151515;font-weight:normal;font-family:'Liberation Mono', monospace;transform:scaleY(1.1);transform-origin:0 19.76px;letter-spacing:0.05px">14 Apr 2025, 14:11:59.633</div>
<div class="t" style="left:1267px;top:1520.44px;font-size:26px;color:#151515;font-weight:normal;font-family:'Liberation Mono', monospace;transform:scaleY(1.1);transform-origin:0 19.76px;letter-spacing:0.05px">type=BPF msg=audit(1744615432.976:12462): prog-id=5100 op=UNLOAD</div>
<div style="position:absolute;left:628px;top:1560px;width:2780px;height:4px;background:#d2d2d2"></div>
<div style="position:absolute;left:634px;top:1570px;width:6px;height:44px;background:#d2d2d2"></div>
<svg style="position:absolute;left:667px;top:1582.0px" width="14" height="20" viewBox="0 0 14 20"><path d="M3.5,3.9 L9.4,10 L3.5,16.1" fill="none" stroke="#6a6e73" stroke-width="4.4" stroke-linecap="round"/></svg>
<div class="t" style="left:727px;top:1580.44px;font-size:26px;color:#151515;font-weight:normal;font-family:'Liberation Mono', monospace;transform:scaleY(1.1);transform-origin:0 19.76px;letter-spacing:0.05px">14 Apr 2025, 14:11:59.632</div>
<div class="t" style="left:1267px;top:1580.44px;font-size:26px;color:#151515;font-weight:normal;font-family:'Liberation Mono', monospace;transform:scaleY(1.1);transform-origin:0 19.76px;letter-spacing:0.05px">type=BPF msg=audit(1744615432.966:12460): prog-id=5099 op=UNLOAD</div>
<div style="position:absolute;left:628px;top:1620px;width:2780px;height:4px;background:#d2d2d2"></div>
<div style="position:absolute;left:634px;top:1630px;width:6px;height:44px;background:#d2d2d2"></div>
<svg style="position:absolute;left:667px;top:1642.0px" width="14" height="20" viewBox="0 0 14 20"><path d="M3.5,3.9 L9.4,10 L3.5,16.1" fill="none" stroke="#6a6e73" stroke-width="4.4" stroke-linecap="round"/></svg>
<div class="t" style="left:727px;top:1640.44px;font-size:26px;color:#151515;font-weight:normal;font-family:'Liberation Mono', monospace;transform:scaleY(1.1);transform-origin:0 19.76px;letter-spacing:0.05px">14 Apr 2025, 14:11:59.632</div>
<div class="t" style="left:1267px;top:1640.44px;font-size:26px;color:#151515;font-weight:normal;font-family:'Liberation Mono', monospace;transform:scaleY(1.1);transform-origin:0 19.76px;letter-spacing:0.05px">type=BPF msg=audit(1744615432.966:12459): prog-id=5146 op=LOAD</div>
<div style="position:absolute;left:628px;top:1680px;width:2780px;height:4px;background:#d2d2d2"></div>
<div style="position:absolute;left:634px;top:1690px;width:6px;height:44px;background:#d2d2d2"></div>
<svg style="position:absolute;left:667px;top:1702.0px" width="14" height="20" viewBox="0 0 14 20"><path d="M3.5,3.9 L9.4,10 L3.5,16.1" fill="none" stroke="#6a6e73" stroke-width="4.4" stroke-linecap="round"/></svg>
<div class="t" style="left:727px;top:1700.44px;font-size:26px;color:#151515;font-weight:normal;font-family:'Liberation Mono', monospace;transform:scaleY(1.1);transform-origin:0 19.76px;letter-spacing:0.05px">14 Apr 2025, 14:11:59.632</div>
<div class="t" style="left:1267px;top:1700.44px;font-size:26px;color:#151515;font-weight:normal;font-family:'Liberation Mono', monospace;transform:scaleY(1.1);transform-origin:0 19.76px;letter-spacing:0.05px">type=BPF msg=audit(1744615432.956:12458): prog-id=5098 op=UNLOAD</div>
<div style="position:absolute;left:628px;top:1740px;width:2780px;height:4px;background:#d2d2d2"></div>
<div style="position:absolute;left:634px;top:1750px;width:6px;height:44px;background:#d2d2d2"></div>
<svg style="position:absolute;left:667px;top:1762.0px" width="14" height="20" viewBox="0 0 14 20"><path d="M3.5,3.9 L9.4,10 L3.5,16.1" fill="none" stroke="#6a6e73" stroke-width="4.4" stroke-linecap="round"/></svg>
<div class="t" style="left:727px;top:1760.44px;font-size:26px;color:#151515;font-weight:normal;font-family:'Liberation Mono', monospace;transform:scaleY(1.1);transform-origin:0 19.76px;letter-spacing:0.05px">14 Apr 2025, 14:11:59.632</div>
<div class="t" style="left:1267px;top:1760.44px;font-size:26px;color:#151515;font-weight:normal;font-family:'Liberation Mono', monospace;transform:scaleY(1.1);transform-origin:0 19.76px;letter-spacing:0.05px">type=BPF msg=audit(1744615432.956:12457): prog-id=5145 op=LOAD</div>
<div style="position:absolute;left:628px;top:1800px;width:2780px;height:4px;background:#d2d2d2"></div>
<div style="position:absolute;left:634px;top:1810px;width:6px;height:44px;background:#d2d2d2"></div>
<svg style="position:absolute;left:667px;top:1822.0px" width="14" height="20" viewBox="0 0 14 20"><path d="M3.5,3.9 L9.4,10 L3.5,16.1" fill="none" stroke="#6a6e73" stroke-width="4.4" stroke-linecap="round"/></svg>
<div class="t" style="left:727px;top:1820.44px;font-size:26px;color:#151515;font-weight:normal;font-family:'Liberation Mono', monospace;transform:scaleY(1.1);transform-origin:0 19.76px;letter-spacing:0.05px">14 Apr 2025, 14:11:54.149</div>
<div class="t" style="left:1267px;top:1820.44px;font-size:26px;color:#151515;font-weight:normal;font-family:'Liberation Mono', monospace;transform:scaleY(1.1);transform-origin:0 19.76px;letter-spacing:0.05px">type=BPF msg=audit(1744614569.786:11865): prog-id=4860 op=LOAD</div>
<div style="position:absolute;left:628px;top:1860px;width:2780px;height:4px;background:#d2d2d2"></div>
<div style="position:absolute;left:634px;top:1870px;width:6px;height:44px;background:#d2d2d2"></div>
<svg style="position:absolute;left:667px;top:1882.0px" width="14" height="20" viewBox="0 0 14 20"><path d="M3.5,3.9 L9.4,10 L3.5,16.1" fill="none" stroke="#6a6e73" stroke-width="4.4" stroke-linecap="round"/></svg>
<div class="t" style="left:727px;top:1880.44px;font-size:26px;color:#151515;font-weight:normal;font-family:'Liberation Mono', monospace;transform:scaleY(1.1);transform-origin:0 19.76px;letter-spacing:0.05px">14 Apr 2025, 14:11:54.149</div>
<div class="t" style="left:1267px;top:1880.44px;font-size:26px;color:#151515;font-weight:normal;font-family:'Liberation Mono', monospace;transform:scaleY(1.1);transform-origin:0 19.76px;letter-spacing:0.05px">type=BPF msg=audit(1744614569.786:11864): prog-id=4805 op=UNLOAD</div>
<div style="position:absolute;left:628px;top:1920px;width:2780px;height:4px;background:#d2d2d2"></div>
<div style="position:absolute;left:634px;top:1930px;width:6px;height:44px;background:#d2d2d2"></div>
<svg style="position:absolute;left:667px;top:1942.0px" width="14" height="20" viewBox="0 0 14 20"><path d="M3.5,3.9 L9.4,10 L3.5,16.1" fill="none" stroke="#6a6e73" stroke-width="4.4" stroke-linecap="round"/></svg>
<div class="t" style="left:727px;top:1940.44px;font-size:26px;color:#151515;font-weight:normal;font-family:'Liberation Mono', monospace;transform:scaleY(1.1);transform-origin:0 19.76px;letter-spacing:0.05px">14 Apr 2025, 14:11:54.149</div>
<div class="t" style="left:1267px;top:1940.44px;font-size:26px;color:#151515;font-weight:normal;font-family:'Liberation Mono', monospace;transform:scaleY(1.1);transform-origin:0 19.76px;letter-spacing:0.05px">type=BPF msg=audit(1744614569.786:11863): prog-id=4859 op=LOAD</div>
<div style="position:absolute;left:628px;top:1980px;width:2780px;height:4px;background:#d2d2d2"></div>
<div style="position:absolute;left:634px;top:1990px;width:6px;height:44px;background:#d2d2d2"></div>
<svg style="position:absolute;left:667px;top:2002.0px" width="14" height="20" viewBox="0 0 14 20"><path d="M3.5,3.9 L9.4,10 L3.5,16.1" fill="none" stroke="#6a6e73" stroke-width="4.4" stroke-linecap="round"/></svg>
<div class="t" style="left:727px;top:2000.44px;font-size:26px;color:#151515;font-weight:normal;font-family:'Liberation Mono', monospace;transform:scaleY(1.1);transform-origin:0 19.76px;letter-spacing:0.05px">14 Apr 2025, 14:11:54.149</div>
<div class="t" style="left:1267px;top:2000.44px;font-size:26px;color:#151515;font-weight:normal;font-family:'Liberation Mono', monospace;transform:scaleY(1.1);transform-origin:0 19.76px;letter-spacing:0.05px">type=BPF msg=audit(1744614569.786:11862): prog-id=4804 op=UNLOAD</div>
<div style="position:absolute;left:628px;top:2040px;width:2780px;height:4px;background:#d2d2d2"></div>
<div style="position:absolute;left:634px;top:2050px;width:6px;height:44px;background:#d2d2d2"></div>
<svg style="position:absolute;left:667px;top:2062.0px" width="14" height="20" viewBox="0 0 14 20"><path d="M3.5,3.9 L9.4,10 L3.5,16.1" fill="none" stroke="#6a6e73" stroke-width="4.4" stroke-linecap="round"/></svg>
<div class="t" style="left:727px;top:2060.44px;font-size:26px;color:#151515;font-weight:normal;font-family:'Liberation Mono', monospace;transform:scaleY(1.1);transform-origin:0 19.76px;letter-spacing:0.05px">14 Apr 2025, 14:11:54.149</div>
<div class="t" style="left:1267px;top:2060.44px;font-size:26px;color:#151515;font-weight:normal;font-family:'Liberation Mono', monospace;transform:scaleY(1.1);transform-origin:0 19.76px;letter-spacing:0.05px">type=BPF msg=audit(1744614569.786:11861): prog-id=4858 op=LOAD</div>
<div style="position:absolute;left:628px;top:2100px;width:2780px;height:4px;background:#d2d2d2"></div>
</body></html>
